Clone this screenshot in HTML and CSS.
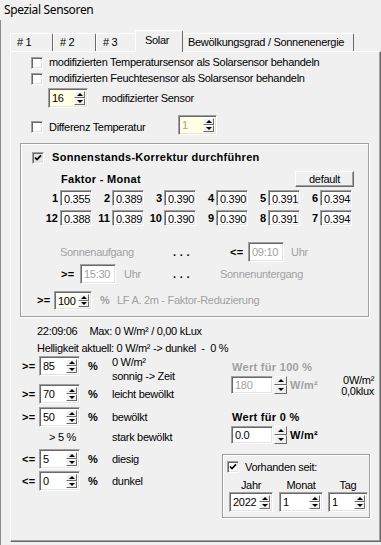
FILE: index.html
```html
<!DOCTYPE html>
<html lang="de">
<head>
  <meta charset="UTF-8">
  <title>Spezial Sensoren</title>
  <link rel="stylesheet" href="styles.css">
</head>
<body>
  <div class="title">Spezial Sensoren</div>

  <div class="frame">
    <div class="tabs">
      <div class="tab t1"># 1</div>
      <div class="tab t2"># 2</div>
      <div class="tab t3"># 3</div>
      <div class="tab t4 active">Solar</div>
      <div class="tab t5">Bewölkungsgrad / Sonnenenergie</div>
    </div>

    <div class="panel">
      <div class="opt first"><span class="check"></span><span>modifizierten Temperatursensor als Solarsensor behandeln</span></div>
      <div class="opt"><span class="check"></span><span>modifizierten Feuchtesensor als Solarsensor behandeln</span></div>

      <div class="sensor-row">
        <div class="spin yellow w40"><span class="val">16</span><span class="btns"><i></i><i class="dn"></i></span></div>
        <span>modifizierter Sensor</span>
      </div>

      <div class="diff-row">
        <div class="diff-label"><span class="check"></span><span>Differenz Temperatur</span></div>
        <div class="spin yellow off w39"><span class="val">1</span><span class="btns"><i></i><i class="dn"></i></span></div>
      </div>

      <div class="group sun">
        <div class="gcb">
          <span class="check on gray"><svg viewBox="0 0 8 8" width="8" height="8"><path d="M1 3.5 L3 5.6 L7 1.4" fill="none" stroke="#000" stroke-width="1.7"/></svg></span>
          <span class="b">Sonnenstands-Korrektur durchführen</span>
        </div>
        <div class="faktor-row">
          <span class="b">Faktor - Monat</span>
          <button class="btn">default</button>
        </div>
        <div class="months">
          <span class="b">1</span><span class="fld">0.355</span>
          <span class="b">2</span><span class="fld">0.389</span>
          <span class="b">3</span><span class="fld">0.390</span>
          <span class="b">4</span><span class="fld">0.390</span>
          <span class="b">5</span><span class="fld">0.391</span>
          <span class="b">6</span><span class="fld">0.394</span>
          <span class="b">12</span><span class="fld">0.388</span>
          <span class="b">11</span><span class="fld">0.389</span>
          <span class="b">10</span><span class="fld">0.390</span>
          <span class="b">9</span><span class="fld">0.390</span>
          <span class="b">8</span><span class="fld">0.391</span>
          <span class="b">7</span><span class="fld">0.394</span>
        </div>
        <div class="sun-row r1">
          <span class="dim w-auf">Sonnenaufgang</span>
          <span class="b dots w-dots1">. . .</span>
          <span class="b w-le">&lt;=</span>
          <span class="fld off time">09:10</span>
          <span class="dim uhr">Uhr</span>
        </div>
        <div class="sun-row r2">
          <span class="b w-ge">&gt;=</span>
          <span class="fld off time">15:30</span>
          <span class="dim uhr w-uhr">Uhr</span>
          <span class="b dots w-dots2">. . .</span>
          <span class="dim">Sonnenuntergang</span>
        </div>
        <div class="sun-row r3">
          <span class="b w-ge2">&gt;=</span>
          <div class="spin cream w38"><span class="val">100</span><span class="btns"><i></i><i class="dn"></i></span></div>
          <span class="b dim pct">%</span>
          <span class="dim">LF A. 2m - Faktor-Reduzierung</span>
        </div>
      </div>

      <div class="status s1"><span class="time-now">22:09:06</span>Max: 0 W/m² / 0,00 kLux</div>
      <div class="status s2">Helligkeit aktuell: 0 W/m² -&gt; dunkel &nbsp;- &nbsp;0 %</div>

      <div class="bottom">
        <div class="levels">
          <div class="lvl l1">
            <span class="b op">&gt;=</span>
            <div class="spin w41"><span class="val">85</span><span class="btns"><i></i><i class="dn"></i></span></div>
            <span class="b unit">%</span>
            <span class="two">0 W/m²<br>sonnig -&gt; Zeit</span>
          </div>
          <div class="lvl l2">
            <span class="b op">&gt;=</span>
            <div class="spin w41"><span class="val">70</span><span class="btns"><i></i><i class="dn"></i></span></div>
            <span class="b unit">%</span>
            <span>leicht bewölkt</span>
          </div>
          <div class="lvl l3">
            <span class="b op">&gt;=</span>
            <div class="spin w41"><span class="val">50</span><span class="btns"><i></i><i class="dn"></i></span></div>
            <span class="b unit">%</span>
            <span>bewölkt</span>
          </div>
          <div class="lvl l4">
            <span class="op"></span>
            <span class="gt5">&gt; 5 %</span>
            <span class="unit"></span>
            <span>stark bewölkt</span>
          </div>
          <div class="lvl l5">
            <span class="b op">&lt;=</span>
            <div class="spin w41"><span class="val">5</span><span class="btns"><i></i><i class="dn"></i></span></div>
            <span class="b unit">%</span>
            <span>diesig</span>
          </div>
          <div class="lvl l6">
            <span class="b op">&lt;=</span>
            <div class="spin w41"><span class="val">0</span><span class="btns"><i></i><i class="dn"></i></span></div>
            <span class="b unit">%</span>
            <span>dunkel</span>
          </div>
        </div>

        <div class="values">
          <div class="b dim wert w100">Wert für 100 %</div>
          <div class="val-row">
            <span class="fld off num">180</span>
            <span class="btns ext"><i></i><i class="dn"></i></span>
            <span class="b dim wm">W/m²</span>
            <span class="side"><span>0W/m²</span><span>0,0klux</span></span>
          </div>
          <div class="b wert w0">Wert für 0 %</div>
          <div class="val-row">
            <span class="fld num">0.0</span>
            <span class="btns ext"><i></i><i class="dn"></i></span>
            <span class="b wm">W/m²</span>
          </div>

          <div class="group since">
            <div class="since-cb">
              <span class="check on"><svg viewBox="0 0 8 8" width="8" height="8"><path d="M1 3.5 L3 5.6 L7 1.4" fill="none" stroke="#000" stroke-width="1.7"/></svg></span>
              <span>Vorhanden seit:</span>
            </div>
            <div class="date-heads">
              <span class="w44">Jahr</span>
              <span class="w44">Monat</span>
              <span class="w40">Tag</span>
            </div>
            <div class="date-row">
              <div class="spin w44"><span class="val">2022</span><span class="btns"><i></i><i class="dn"></i></span></div>
              <div class="spin w44"><span class="val">1</span><span class="btns"><i></i><i class="dn"></i></span></div>
              <div class="spin w40"><span class="val">1</span><span class="btns"><i></i><i class="dn"></i></span></div>
            </div>
          </div>
        </div>
      </div>
    </div>
  </div>
</body>
</html>
```

FILE: styles.css
```css
*{margin:0;padding:0;box-sizing:border-box}
body{width:381px;height:545px;overflow:hidden;background:#f0f0f0;color:#000;font:11px/13px "Liberation Sans",Arial,sans-serif;letter-spacing:-0.3px}
.b{font-weight:bold;letter-spacing:0.3px}
.dim{color:#a0a0a0}

.title{height:20px;padding-left:4px;font:12px/20px "Noto Sans","Open Sans",sans-serif;letter-spacing:-0.35px}
.frame{border-left:1px solid #8c8c8c;height:525px;padding-left:9px;padding-top:13px}

/* tabs */
.tabs{display:flex;align-items:flex-end;height:18px}
.tab{height:18px;padding-left:6px;line-height:17px;background:#f0f0f0;border:1px solid;border-color:#fff #696969 transparent #fff;border-bottom:0;border-radius:2px 2px 0 0}
.t1,.t2{width:43px}
.t3{width:41px}
.t4{width:44px}
.t5{width:173px}
.tab.active{position:relative;z-index:1;height:22px;width:48px;margin:0 -2px -1px;padding-left:9px;line-height:19px}

.panel{height:491px;border:1px solid;border-color:#fff #696969 #696969 #fff;box-shadow:inset -1px -1px #a0a0a0}

/* controls */
.check{display:inline-flex;align-items:center;justify-content:center;width:12px;height:12px;flex:none;background:#fff;border:1px solid;border-color:#a0a0a0 #fff #fff #a0a0a0;box-shadow:inset 1px 1px #696969,inset -1px -1px #e3e3e3}
.check.gray{background:#e4e4e4}
.check svg{display:block}

.fld{display:block;height:16px;padding-left:3px;line-height:12px;padding-top:2px;background:#fff;border:1px solid;border-color:#a0a0a0 #fff #fff #a0a0a0;box-shadow:inset 1px 1px #696969,inset -1px -1px #e3e3e3}
.fld.off{color:#a0a0a0}

.spin{display:flex;height:20px;flex:none;padding:2px;background:#fff;border:1px solid;border-color:#a0a0a0 #fff #fff #a0a0a0;box-shadow:inset 1px 1px #696969,inset -1px -1px #e3e3e3}
.spin .val{flex:1;padding-left:1px;line-height:14px}
.spin.yellow{background:#ffffe3}
.spin.cream{background:#fbfbf2}
.spin.off .val{color:#a0a0a0}
.btns{display:flex;flex-direction:column;width:11px;flex:none}
.btns i{flex:1;display:flex;align-items:center;justify-content:center;background:#f0f0f0;border:1px solid;border-color:#fff #696969 #696969 #fff}
.btns i::after{content:"";border-left:3px solid transparent;border-right:3px solid transparent;border-bottom:3px solid #000}
.btns i.dn::after{border-bottom:0;border-top:3px solid #000}
.btns.ext{width:13px;height:18px;margin-left:1px}

.btn{width:59px;height:16px;font:11px/12px "Liberation Sans",Arial,sans-serif;letter-spacing:-0.3px;background:#f0f0f0;border:1px solid;border-color:#fff #696969 #696969 #fff;box-shadow:inset -1px -1px #a0a0a0}

.w38{width:38px}.w39{width:39px}.w40{width:40px}.w41{width:41px}.w44{width:44px}

/* top options */
.opt{display:flex;align-items:center;gap:6px;height:15px;margin-top:1px;padding-left:20px}
.opt.first{margin-top:3px}
.sensor-row{display:flex;align-items:center;gap:14px;height:20px;margin-top:2px;padding-left:37px}
.diff-row{display:flex;align-items:center;height:20px;margin-top:7px;padding-left:20px}
.diff-label{display:flex;align-items:center;gap:6px;width:147px;margin-top:4px}

/* group boxes */
.group{border:1px solid #a0a0a0;box-shadow:inset 1px 1px #fff,1px 1px #fff}
.sun{margin:8px 11px 0 9px;padding-bottom:6px}
.gcb{display:flex;align-items:center;gap:8px;height:15px;margin-top:6px;padding-left:11px}
.faktor-row{display:flex;align-items:center;height:16px;margin-top:6px;padding-left:40px;padding-right:14px}
.faktor-row .btn{margin-left:auto}
.months{display:grid;grid-template-columns:repeat(6,20px 32px);grid-auto-rows:16px;row-gap:4px;margin-top:3px;padding-left:19px}
.months .b{text-align:right;padding-right:2px;line-height:16px;letter-spacing:0}

.sun-row{display:flex;align-items:center;height:20px}
.sun-row.r1{margin-top:16px;padding-left:39px}
.sun-row.r2{margin-top:2px;padding-left:40px}
.sun-row.r3{margin-top:7px;height:19px;padding-left:16px}
.sun-row .time{width:36px;height:20px;padding-top:3px}
.w-auf{width:113px}
.w-dots1{width:57px}
.w-le{width:18px}
.uhr{margin-left:7px}
.w-ge{width:19px}
.w-uhr{width:49px;margin-left:8px}
.w-dots2{width:47px}
.w-ge2{width:17px}
.r3 .spin{height:19px}
.pct{width:17px;margin-left:8px}

/* status lines */
.status{height:14px;line-height:14px;padding-left:26px}
.s1{margin-top:7px}
.s2{margin-top:3px}
.time-now{margin-right:12px}

/* bottom */
.bottom{display:flex;margin-top:1px}
.levels{width:211px;padding-left:11px}
.lvl{display:flex;align-items:center;height:20px;margin-top:2px}
.lvl.l1{margin-top:0}
.lvl.l2{margin-top:8px}
.lvl.l3{margin-top:3px}
.lvl.l4{margin-top:0}
.op{width:17px}
.unit{width:24px;margin-left:8px}
.two{align-self:flex-start;margin-top:-1px;line-height:14px}
.gt5{width:41px;padding-left:10px}

.values{width:152px}
.wert{height:14px;line-height:14px;padding-left:10px}
.w100{margin-top:4px}
.w0{margin-top:16px}
.val-row{display:flex;align-items:center;height:18px;margin-top:2px;padding-left:9px}
.val-row .num{width:42px;height:18px}
.wm{margin-left:3px}
.side{display:flex;flex-direction:column;align-items:flex-end;margin-left:auto;padding-top:2px;line-height:11px}

.since{width:148px;height:64px;margin-top:10px}
.since-cb{display:flex;align-items:center;gap:6px;height:12px;margin-top:6px;padding-left:4px}
.date-heads{display:flex;gap:6px;height:12px;margin-top:6px;padding-left:6px;line-height:12px}
.date-heads span{text-align:center}
.date-heads .w40{margin-left:-1px}
.date-row{display:flex;gap:6px;margin-top:1px;padding-left:6px}
.date-row .w40{margin-left:-1px}
```
